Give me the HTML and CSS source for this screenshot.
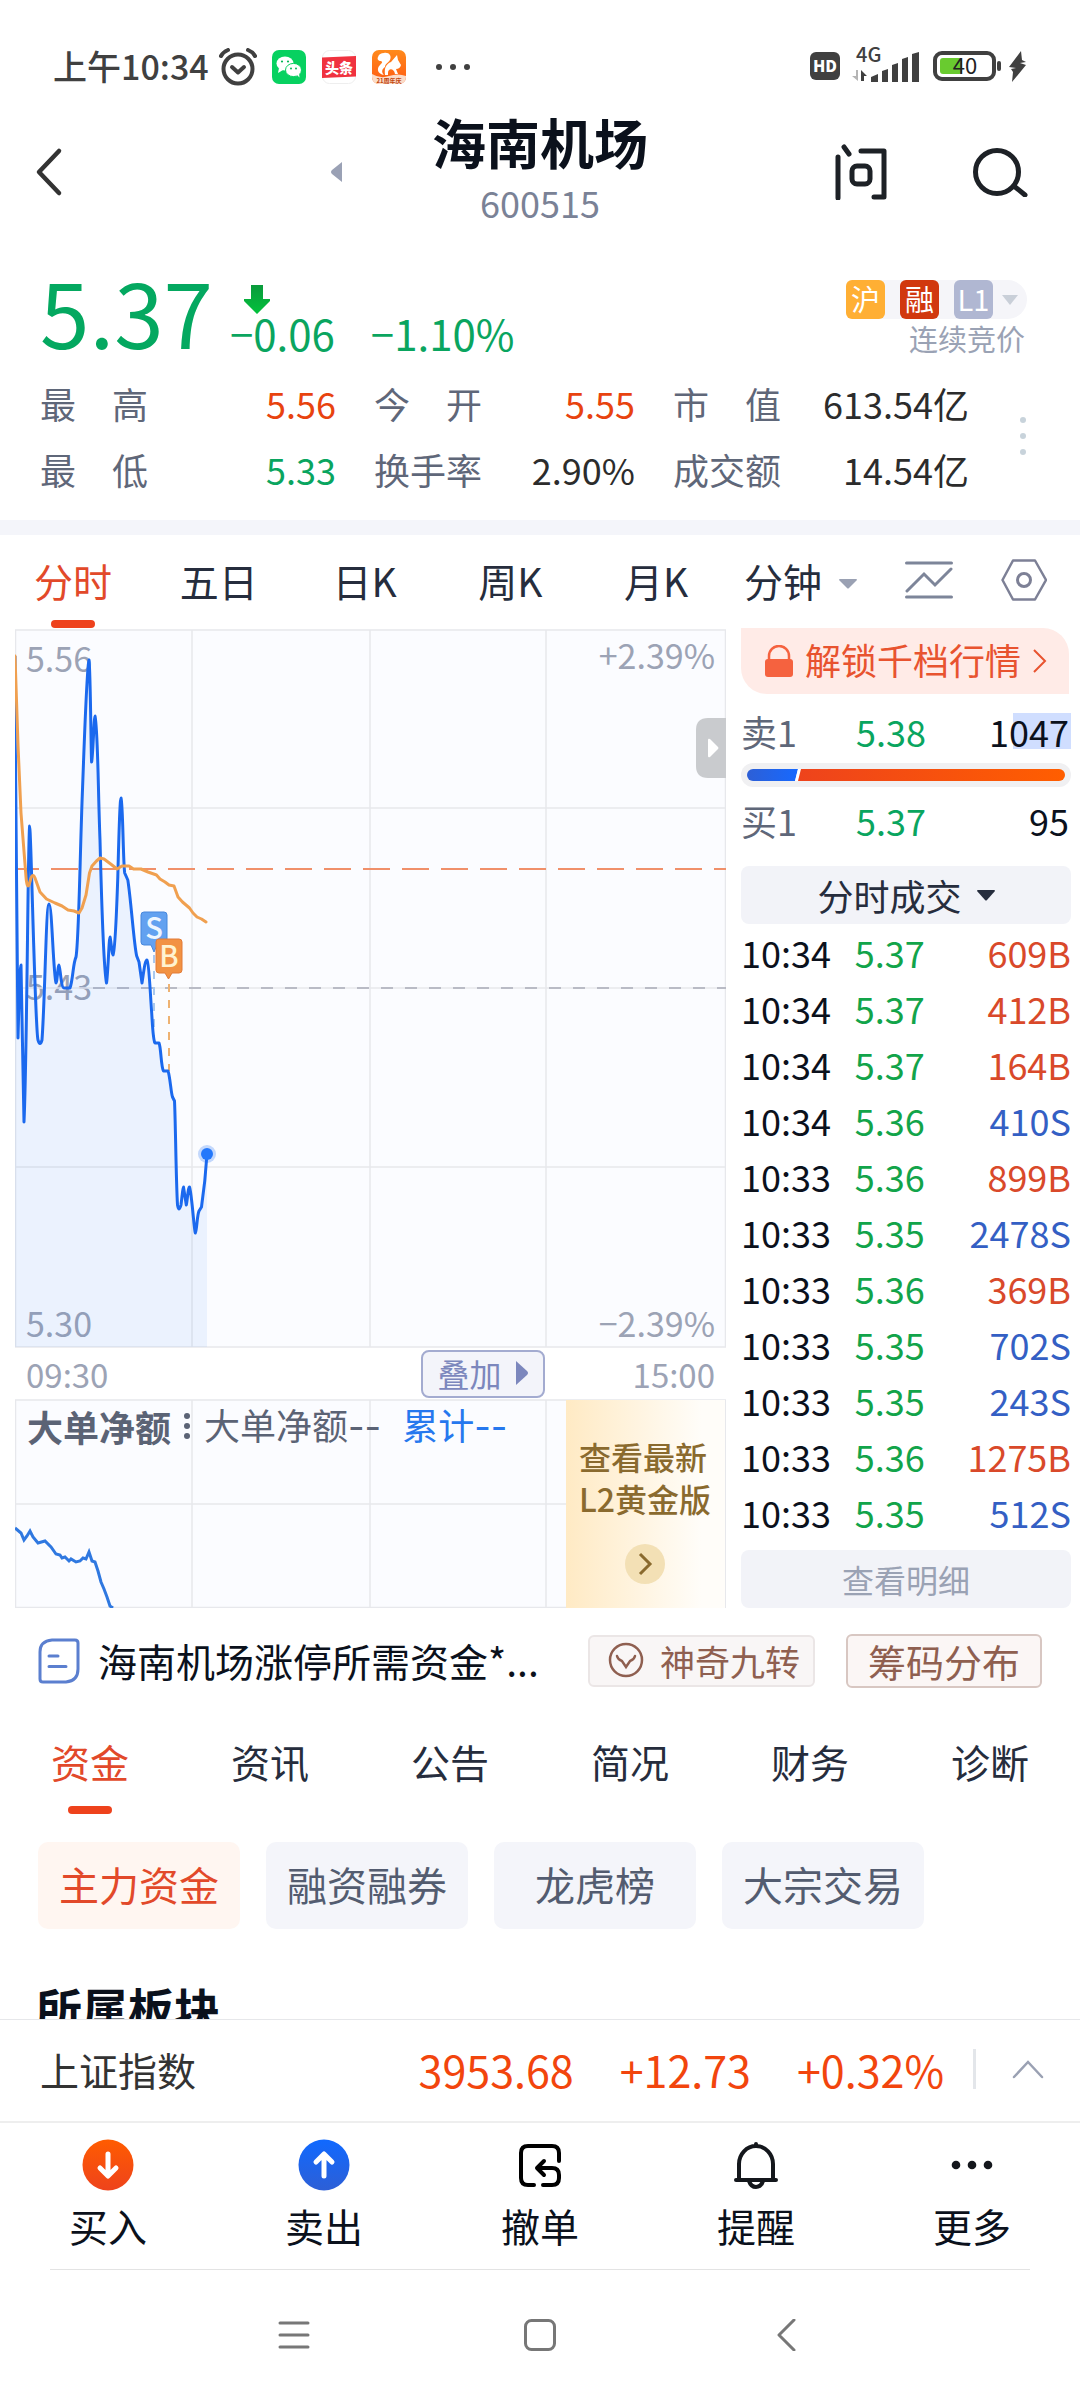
FILE: index.html
```html
<!DOCTYPE html>
<html lang="zh-CN">
<head>
<meta charset="utf-8">
<meta name="viewport" content="width=device-width, initial-scale=1">
<title>海南机场 600515</title>
<link rel="stylesheet" href="styles.css">
</head>
<body>
<div class="status">
  <span class="clock">上午10:34</span>
  <svg class="alarm" width="40" height="38" viewBox="0 0 40 38" fill="none" stroke="#404040" stroke-linecap="round"><circle cx="20" cy="21" r="14.500" stroke-width="4"/><path d="M14 19l6 5.500 6-5.500" stroke-width="4" stroke-linejoin="round"/><path d="M3 8q2-4 7-6M37 8q-2-4-7-6" stroke-width="4"/></svg>
  <svg class="app" width="34" height="34" viewBox="0 0 34 34"><rect width="34" height="34" rx="7" fill="#07d160"/><ellipse cx="13" cy="13.500" rx="8.500" ry="7" fill="#fff"/><path d="M7 18l-1 5 5-3z" fill="#fff"/><ellipse cx="21.500" cy="20" rx="8" ry="6.600" fill="#fff" stroke="#07d160"/><path d="M25 25l2.500 2.500-.5-4z" fill="#fff"/><g fill="#07b556"><circle cx="10" cy="11.500" r="1.100"/><circle cx="16" cy="11.500" r="1.100"/><circle cx="19" cy="18.500" r="1"/><circle cx="24" cy="18.500" r="1"/></g></svg>
  <svg class="app" width="34" height="34" viewBox="0 0 34 34"><rect x=".5" y=".5" width="33" height="33" rx="7" fill="#fff" stroke="#eee"/><path d="M0 7.500L34 6v20.500L0 28z" fill="#f0323f"/><text x="17" y="22.500" font-size="14" font-weight="900" fill="#fff" text-anchor="middle">头条</text></svg>
  <svg class="app" width="34" height="34" viewBox="0 0 34 34"><defs><linearGradient id="uc" x2="0" y2="1"><stop stop-color="#ff8a1c"/><stop offset="1" stop-color="#ff5a12"/></linearGradient></defs><rect width="34" height="34" rx="7" fill="url(#uc)"/><path d="M0 24q8 5 17 2 9-3 17 0v1a7 7 0 0 1-7 7H7a7 7 0 0 1-7-7z" fill="#fbdcc8"/><path d="M12 3c5-1 8 3 6 7-2 3-5 4-5 7-3 2-4 5-1 8-6-1-8-6-4-10 2-2 3-3 1-4-3 0-4-2-3-4 1-3 3-4 6-4z" fill="#fff"/><path d="M25 5l1 5 3 5q-1 4-5 4l2 5h-3c-1-6-7-6-7-1v2h-3c-1-7 1-11 6-13z" fill="#fff"/><text x="17" y="33" font-size="6" font-weight="700" fill="#c1440c" text-anchor="middle">21周年庆</text></svg>
  <svg class="more" width="36" height="8" viewBox="0 0 36 8" fill="#404040"><circle cx="4" cy="4" r="3"/><circle cx="18" cy="4" r="3"/><circle cx="32" cy="4" r="3"/></svg>
  <svg class="signals" width="218" height="50" viewBox="809 42 218 50">
    <rect x="810" y="52" width="30" height="28" rx="6" fill="#404040"/><text x="825" y="72" font-size="16" font-weight="900" fill="#fff" text-anchor="middle">HD</text>
    <text x="856" y="62" font-size="20" font-weight="500" fill="#404040">4G</text>
    <path d="M858 70v11l-6-5h4v-6z" fill="#b5b5b5"/><path d="M861 81V70l6 6h-3v5z" fill="#404040"/>
    <path d="M871 82v-5l7-3v8zM882 82V71l6-2v13zM892 82V65l6-2v19zM902 82V59l6-2v25zM912 82V54l7-2v30z" fill="#404040"/>
    <rect x="935" y="53" width="59" height="26" rx="7" fill="none" stroke="#404040" stroke-width="4"/><rect x="940" y="58" width="22" height="16" rx="3" fill="#69cb2f"/><rect x="997" y="61" width="4" height="10" rx="2" fill="#404040"/>
    <text x="965" y="74" font-size="22" fill="#222" text-anchor="middle">40</text>
    <path d="M1021 51l-12 16 7 1-5 1 2 3-1 10 14-17-6-2 6-1-4-2z" fill="#404040"/>
  </svg>
</div>

<main>
  <header class="head">
    <button class="icon-btn back" aria-label="返回"><svg width="28" height="50" viewBox="0 0 28 50" fill="none" stroke="#333" stroke-width="4.500" stroke-linecap="round" stroke-linejoin="round"><path d="M24 4L4 25l20 21"/></svg></button>
    <button class="icon-btn prev" aria-label="上一只"><svg width="11" height="20" viewBox="0 0 11 20" fill="#9aa1b5"><path d="M11 0v20L1 12q-2-2 0-4z"/></svg></button>
    <div class="stock"><h1>海南机场</h1><p>600515</p></div>
    <button class="icon-btn ask" aria-label="问"><svg width="52" height="56" viewBox="0 0 52 56" fill="none" stroke="#1d2126" stroke-width="5" stroke-linecap="round" stroke-linejoin="round"><path d="M3 13v41M9 3l5 7M26 7h23v46H39"/><rect x="17" y="22" width="18" height="18" rx="5"/></svg></button>
    <button class="icon-btn" aria-label="搜索"><svg width="56" height="50" viewBox="0 0 56 50" fill="none" stroke="#1d2126" stroke-width="5" stroke-linecap="round"><circle cx="25" cy="25" r="21.500"/><path d="M42 39l11 9"/></svg></button>
  </header>

  <section class="quote">
    <div class="price-row">
      <strong class="price">5.37</strong>
      <div class="change">
        <svg width="26" height="30" viewBox="0 0 26 30"><defs><linearGradient id="dn" x2="0" y2="1"><stop stop-color="#0a9a3c"/><stop offset="1" stop-color="#02c23c"/></linearGradient></defs><path d="M7 1h12v14h7v2L13 30 0 17v-2h7z" fill="url(#dn)"/></svg>
        <p><span>−0.06</span><span>−1.10%</span></p>
      </div>
      <div class="marks">
        <button class="badges"><i class="hu">沪</i><i class="rong">融</i><i class="lv">L1</i><svg width="16" height="10" viewBox="0 0 16 10" fill="#c9cfd8"><path d="M0 0h16L8 10z"/></svg></button>
        <p>连续竞价</p>
      </div>
    </div>
    <div class="stats-row">
      <dl class="stats">
        <div><dt><span>最</span><span>高</span></dt><dd class="up">5.56</dd></div>
        <div><dt><span>今</span><span>开</span></dt><dd class="up">5.55</dd></div>
        <div><dt><span>市</span><span>值</span></dt><dd>613.54亿</dd></div>
        <div><dt><span>最</span><span>低</span></dt><dd class="down">5.33</dd></div>
        <div><dt>换手率</dt><dd>2.90%</dd></div>
        <div><dt>成交额</dt><dd>14.54亿</dd></div>
      </dl>
      <svg width="8" height="40" viewBox="0 0 8 40" fill="#c8d3db"><circle cx="4" cy="4" r="3"/><circle cx="4" cy="20" r="3"/><circle cx="4" cy="36" r="3"/></svg>
    </div>
  </section>

  <nav class="periods">
    <button class="active">分时</button><button>五日</button><button>日K</button><button>周K</button><button>月K</button>
    <div class="tools">
      <button class="minute">分钟<svg width="18" height="10" viewBox="0 0 18 10" fill="#9aa1b3"><path d="M0 1q0-1 1-1h16q1 0 1 1l-8 8q-1 1-2 0z"/></svg></button>
      <button aria-label="画线"><svg width="48" height="40" viewBox="0 0 48 40" fill="none" stroke="#7d8599" stroke-width="3" stroke-linecap="round"><path d="M1.500 3h45M1.500 37h45M2 31l17-17 11 11L46 9"/></svg></button>
      <button aria-label="设置"><svg width="46" height="42" viewBox="0 0 46 42" fill="none" stroke="#7d8096" stroke-width="2.500" stroke-linejoin="round"><path d="M12 1.500h22L45 21 34 40.500H12L1.500 21z"/><circle cx="23" cy="21" r="6.500" stroke-width="3"/></svg></button>
    </div>
  </nav>

  <section class="board">
    <div class="charts">
      <svg class="chart" viewBox="15 629 711 719" role="img" aria-label="分时走势">
        <rect x="15" y="629" width="711" height="718" fill="#fbfcff"/>
        <g fill="#9ca3b5" font-size="34"><text x="26" y="672">5.56</text><text x="26" y="1000">5.43</text><text x="26" y="1337">5.30</text><text x="715" y="669" text-anchor="end">+2.39%</text><text x="715" y="1337" text-anchor="end">−2.39%</text></g>
        <path d="M192 630v717M370 630v717M546 630v717M15 808h711M15 988h711M15 1167h711M15.500 630h710v717h-710z" fill="none" stroke="#e7e8ec" stroke-width="1.500"/>
        <path d="M93 988h633" stroke="#b9bbc5" stroke-width="2" stroke-dasharray="12 12"/>
        <path d="M15 869h711" stroke="#f0906a" stroke-width="2" stroke-dasharray="27 12" stroke-dashoffset="3"/>
        <path class="area" d="M15 656L18 1038 21 965 24 1122 29.600 826 40 1044 49 904 56 983 59 965 64 988H71L76 957 83 787 89 660 92 762 95 716 100 840 106.500 983 110 937 113 955 118 877 121 798 125 873 137 958 142 983 147 960 152 1013 154 1043H159L163 1071H168L172 1097 174 1100 178 1207 183 1187 186 1205 189 1187 195 1233 199 1211 207 1154V1347H15z" fill="#1b6df5" fill-opacity=".07"/>
        <path d="M154 955v88" stroke="#a9c8ee" stroke-width="2" stroke-dasharray="8 8"/><path d="M169 984v87" stroke="#eeb272" stroke-width="2" stroke-dasharray="8 8"/>
        <path d="M15 656C15 780 16.500 900 18 1038C19 1000 20 965 21 965C22 1000 23 1090 24 1122C27 1060 28 830 29.600 826C31 826 35 1030 38 1040Q40 1047 42 1040C45 1000 46 904 49 904C52 904 53 970 56 983C57 983 58 965 59 965C60 965 61 988 64 988H70C73 980 73 963 76 957C79 940 80 850 82.600 787C85 720 87 665 89 660C90.500 670 91 755 91.600 762C93 755 94 716 95 716C98 730 98 790 100 840C102 920 105 975 106.500 983C108 975 109 937 110 937C111 940 112 955 113 955C114 953 116 930 117.800 877C119 830 120 798 121 798C123 805 123 860 124.700 873L127.800 880C131 900 134 945 136.700 956L139 962 142 983C144 970 145 960 147 960C149 962 150 990 151.700 1013C152.500 1025 153 1040 155 1043H159C161 1047 161 1067 163.500 1071H168C170 1076 171 1093 172.500 1097L174.500 1101C175.500 1120 176 1180 177.500 1205Q179 1213 181 1205C182 1197 183 1187 183.500 1187L186.300 1205C187.500 1200 188 1187 189.500 1187C192 1195 194 1230 195.300 1233C197 1230 197 1215 199 1211L201.500 1207C204 1190 206 1170 207 1154" fill="none" stroke="#1b69ee" stroke-width="3" stroke-linejoin="round"/>
        <path d="M15 656C16 690 17 720 18 745L21 813 26 877Q27 889 29 885L31 878Q33 873 35 878L40 892 46.500 899 55 903 62 906 68 910 74 911 79 913 82 908 86 895 89.500 873 92 866 96.500 861 100 858 104 859 112 865 117 869 122 866 129 866 133.500 869 141 869 148 872 156.500 875 160 879 165 882 169 885 174 886 178 897 182.500 902 189.500 908 193 913 197 917 201.500 919 206 922" fill="none" stroke="#f0a050" stroke-width="3" stroke-linejoin="round" stroke-linecap="round"/>
        <circle cx="207" cy="1154" r="9" fill="#1b6df5" fill-opacity=".25"/><circle cx="207" cy="1154" r="6" fill="#2478fb"/>
        <path d="M144 912h20q3 0 3 3v27q0 3-3 3h-7l-3 7-3-7h-7q-3 0-3-3v-27q0-3 3-3z" fill="#62a1f0" stroke="#4787dc"/><text x="154" y="939" font-size="29" font-weight="500" fill="#eef6ff" text-anchor="middle">S</text>
        <path d="M159 939h20q3 0 3 3v28q0 3-3 3h-7l-3.500 6-3.500-6h-6q-3 0-3-3v-28q0-3 3-3z" fill="#f29243" stroke="#e27b38"/><text x="169" y="967" font-size="29" font-weight="500" fill="#fff3d0" text-anchor="middle">B</text>
        <path d="M726 718h-18q-12 0-12 12v36q0 12 12 12h18z" fill="#c9cbce"/><path d="M708 740q0-2 2-1l8 8q1 1 0 2l-8 8q-2 1-2-1z" fill="#fff"/>
      </svg>
      <div class="axis"><span>09:30</span><button>叠加<svg width="12" height="24" viewBox="0 0 12 24" fill="#7c87bd"><path d="M0 0l11 10q2 2 0 4L0 24z"/></svg></button><span>15:00</span></div>
      <div class="flow">
        <svg class="flow-chart" viewBox="15 1399 711 209" role="img" aria-label="大单净额走势">
          <rect x="15" y="1399" width="711" height="209" fill="#fbfcff"/>
          <path d="M192 1400v208M370 1400v208M546 1400v208M15 1504h711M15.500 1400h710v207.500h-710z" fill="none" stroke="#e7e8ec" stroke-width="1.500"/>
          <path d="M15 1528l6 5 3 7 3-4 3-5 3 6 5 6 7-2 6 6 5 7 4 1 2 3 3-1 4 4 2-2 5 3 4-1 3-3 3 1 3-7 3 9 3 1 3 9 3 11 3 7 3 8 3 9 3 2" fill="none" stroke="#2f78e0" stroke-width="3"/>
        </svg>
        <p class="flow-title"><b>大单净额</b><svg width="8" height="28" viewBox="0 0 8 28" fill="#5b6375"><circle cx="4" cy="4" r="3"/><circle cx="4" cy="14" r="3"/><circle cx="4" cy="24" r="3"/></svg><span>大单净额<span class="dash">--</span></span><span class="sum">累计<span class="dash">--</span></span></p>
        <a class="gold" href="#l2">查看最新<br>L2黄金版<svg width="40" height="40" viewBox="0 0 40 40" fill="none"><circle cx="20" cy="20" r="20" fill="#f3e0b5"/><path d="M15 10l10 10-10 10" stroke="#8a6a2e" stroke-width="3"/></svg></a>
      </div>
    </div>

    <div class="book">
      <a class="unlock" href="#unlock"><svg width="28" height="32" viewBox="0 0 28 32"><rect y="14" width="28" height="18" rx="3" fill="#f5623f"/><path d="M4 15v-4a10 10 0 0 1 20 0v4" fill="none" stroke="#f5623f" stroke-width="2.500"/></svg><span>解锁千档行情</span><svg width="14" height="24" viewBox="0 0 14 24" fill="none" stroke="#e8532f" stroke-width="2"><path d="M1 1l11 11L1 23"/></svg></a>
      <div class="level"><span>卖1</span><span class="down">5.38</span><span class="vol lit">1047</span></div>
      <svg class="ratio" viewBox="0 0 330 24" role="img" aria-label="买卖比"><defs><linearGradient id="buy"><stop stop-color="#2d5fd6"/><stop offset="1" stop-color="#1769ff"/></linearGradient><linearGradient id="sell"><stop stop-color="#ee431c"/><stop offset="1" stop-color="#ff5e00"/></linearGradient></defs><rect width="330" height="24" rx="12" fill="#f0f0f2"/><path d="M12 6h45l-3 12H12a6 6 0 0 1 0-12z" fill="url(#buy)"/><path d="M57 6h3l-3 12h-3z" fill="#fff"/><path d="M60 6h258a6 6 0 0 1 0 12H57z" fill="url(#sell)"/></svg>
      <div class="level"><span>买1</span><span class="down">5.37</span><span class="vol">95</span></div>
      <button class="trade-head">分时成交<svg width="18" height="11" viewBox="0 0 18 11" fill="#262d3d"><path d="M0 1q0-1 1-1h16q1 0 1 1l-8 9q-1 1-2 0z"/></svg></button>
      <table class="ticks">
        <tr><td>10:34</td><td>5.37</td><td class="b">609B</td></tr>
        <tr><td>10:34</td><td>5.37</td><td class="b">412B</td></tr>
        <tr><td>10:34</td><td>5.37</td><td class="b">164B</td></tr>
        <tr><td>10:34</td><td>5.36</td><td class="s">410S</td></tr>
        <tr><td>10:33</td><td>5.36</td><td class="b">899B</td></tr>
        <tr><td>10:33</td><td>5.35</td><td class="s">2478S</td></tr>
        <tr><td>10:33</td><td>5.36</td><td class="b">369B</td></tr>
        <tr><td>10:33</td><td>5.35</td><td class="s">702S</td></tr>
        <tr><td>10:33</td><td>5.35</td><td class="s">243S</td></tr>
        <tr><td>10:33</td><td>5.36</td><td class="b">1275B</td></tr>
        <tr><td>10:33</td><td>5.35</td><td class="s">512S</td></tr>
      </table>
      <button class="detail">查看明细</button>
    </div>
  </section>

  <section class="news">
    <svg width="42" height="46" viewBox="0 0 42 46" fill="none" stroke="#5b7fcf" stroke-width="3" stroke-linecap="round"><path d="M14 2h23q3 0 3 3v26q0 12-12 13H5q-3 0-3-3V14Q2 3 14 2z"/><path d="M11 18h9M11 28.500h17"/></svg>
    <a href="#news">海南机场涨停所需资金*...</a>
    <button class="nine"><svg width="36" height="36" viewBox="0 0 36 36" fill="none" stroke="#8f5f50" stroke-width="2.500" stroke-linecap="round"><circle cx="18" cy="18" r="16"/><path d="M9 14q1 4 5 5l4 6 4-6q4-1 5-5"/></svg>神奇九转</button>
    <button class="chips-dist">筹码分布</button>
  </section>

  <nav class="topics"><button class="active">资金</button><button>资讯</button><button>公告</button><button>简况</button><button>财务</button><button>诊断</button></nav>
  <div class="pills"><button class="on">主力资金</button><button>融资融券</button><button>龙虎榜</button><button>大宗交易</button></div>
  <h2>所属板块</h2>
</main>

<footer>
  <div class="index"><span class="name">上证指数</span><span>3953.68</span><span>+12.73</span><span>+0.32%</span><i class="sep"></i><button class="icon-btn" aria-label="展开"><svg width="32" height="20" viewBox="0 0 32 20" fill="none" stroke="#9aa1b3" stroke-width="2.500" stroke-linecap="round"><path d="M2 18L16 3l14 15"/></svg></button></div>
  <nav class="actions">
    <button><svg width="52" height="52" viewBox="0 0 52 52" fill="none" stroke="#fff" stroke-width="5" stroke-linecap="round" stroke-linejoin="round"><defs><linearGradient id="g1" x2="0" y2="1"><stop stop-color="#ff5c00"/><stop offset="1" stop-color="#ee431c"/></linearGradient></defs><circle cx="26" cy="26" r="25.500" fill="url(#g1)" stroke="none"/><path d="M26 15v21M18 29l8 8 8-8"/></svg>买入</button>
    <button><svg width="52" height="52" viewBox="0 0 52 52" fill="none" stroke="#fff" stroke-width="5" stroke-linecap="round" stroke-linejoin="round"><defs><linearGradient id="g2" x2="0" y2="1"><stop stop-color="#1069ff"/><stop offset="1" stop-color="#2d5fd6"/></linearGradient></defs><circle cx="26" cy="26" r="25.500" fill="url(#g2)" stroke="none"/><path d="M26 37V16M18 23l8-8 8 8"/></svg>卖出</button>
    <button><svg width="52" height="52" viewBox="0 0 52 52" fill="none" stroke="#000" stroke-width="4" stroke-linecap="round" stroke-linejoin="round"><path d="M45 22v-8q0-7-7-7H14q-7 0-7 7v25q0 7 7 7h6M25 29h13q7 0 7 7v3q0 7-7 7h-9M30 22l-7 7 7 7"/></svg>撤单</button>
    <button><svg width="52" height="52" viewBox="0 0 52 52" fill="none" stroke="#14171c" stroke-width="4" stroke-linecap="round" stroke-linejoin="round"><path d="M6 41h40M9 40V25a17 18 0 0 1 34 0v15M26 5v1M19 42q2 6 7 6t7-6"/></svg>提醒</button>
    <button><svg width="52" height="52" viewBox="0 0 52 52" fill="#14171c"><circle cx="10" cy="26" r="4.300"/><circle cx="26" cy="26" r="4.300"/><circle cx="42" cy="26" r="4.300"/></svg>更多</button>
  </nav>
  <nav class="system">
    <button class="icon-btn" aria-label="菜单"><svg width="32" height="32" viewBox="0 0 32 32" stroke="#777" stroke-width="3" stroke-linecap="round"><path d="M2 4h28M2 16h28M2 28h28"/></svg></button>
    <button class="icon-btn" aria-label="主页"><svg width="32" height="32" viewBox="0 0 32 32" fill="none" stroke="#777" stroke-width="3"><rect x="1.500" y="1.500" width="29" height="29" rx="6"/></svg></button>
    <button class="icon-btn" aria-label="后退"><svg width="32" height="32" viewBox="0 0 32 32" fill="none" stroke="#777" stroke-width="3" stroke-linecap="round" stroke-linejoin="round"><path d="M24 1L9 16l15 15"/></svg></button>
  </nav>
</footer>
</body>
</html>
```
FILE: styles.css
```css
* { box-sizing: border-box; margin: 0; padding: 0; }
body {
  height: 100vh;
  display: flex;
  flex-direction: column;
  background: #fff;
  color: #0b111c;
  font-family: "Noto Sans CJK SC", "Noto Sans", sans-serif;
  font-size: 36px;
}
button { background: none; border: 0; color: inherit; font: inherit; cursor: pointer; }
a { color: inherit; text-decoration: none; }
svg { display: block; flex: none; }
i { font-style: normal; }
main { flex: 1; min-height: 0; overflow: hidden; }
.icon-btn { display: flex; align-items: center; justify-content: center; }
.up { color: #e8430f; }
.down { color: #0aa55f; }

.status { display: flex; align-items: center; height: 92px; padding: 42px 53px 0; }
.clock { font-size: 34px; line-height: 46px; padding-bottom: 2px; color: #404040; font-weight: 500; margin-right: 9px; }
.alarm { margin-right: 14px; }
.app { margin-right: 16px; }
.more { margin-left: 13px; }
.signals { margin-left: auto; }

.head { display: flex; align-items: center; height: 138px; padding: 22px 52px 0 35px; position: relative; }
.prev { margin-left: 268px; }
.stock { position: absolute; left: 50%; transform: translateX(-50%); top: 20px; text-align: center; }
.stock h1 { font-size: 54px; line-height: 60px; font-weight: 700; white-space: nowrap; }
.stock p { font-size: 36px; line-height: 40px; margin-top: 10px; color: #7a8296; }
.ask { margin-left: auto; margin-right: 85px; }

.quote { padding: 36px 53px 18px 40px; border-bottom: 15px solid #f4f5fa; }
.price-row { display: flex; align-items: flex-end; }
.price { font-size: 89px; line-height: 90px; font-weight: 400; color: #04a860; }
.change { margin-left: 17px; padding-bottom: 4px; color: #0aa55f; font-size: 42px; line-height: 38px; }
.change svg { margin-left: 14px; }
.change p { display: flex; gap: 36px; }
.marks { margin-left: auto; display: flex; flex-direction: column; align-items: flex-end; padding-bottom: 2px; }
.marks p { font-size: 29px; line-height: 32px; margin: 3px 2px 0 0; color: #9aa2b4; }
.badges { display: flex; align-items: center; gap: 15px; background: #f5f5f9; border-radius: 8px 20px 20px 8px; padding-right: 9px; }
.badges i { width: 39px; height: 39px; line-height: 37px; border-radius: 6px; color: #fff; font-size: 29px; text-align: center; }
.badges svg { margin-left: -6px; }
.hu { background: #ffaf34; }
.rong { background: #d1380e; }
.badges .lv { background: #b0b7d2; }
.stats-row { display: flex; align-items: center; margin-top: 14px; }
.stats { flex: 1; display: grid; grid-template-columns: 295fr 260fr 295fr; column-gap: 38px; line-height: 66px; }
.stats div { display: flex; justify-content: space-between; }
.stats dt { width: 108px; display: flex; justify-content: space-between; color: #5f6779; }
.stats dd:not([class]) { color: #2c2c2c; }
.stats-row > svg { margin-left: 50px; }

.periods { display: flex; height: 93px; font-size: 39px; color: #262d3d; }
.periods > button { flex: 0 0 13.5%; height: 90px; }
.periods .active, .topics .active { position: relative; color: #e2492a; }
.periods .active::after, .topics .active::after {
  content: ""; position: absolute; left: 50%; bottom: -3px; width: 44px; height: 8px;
  margin-left: -22px; border-radius: 4px; background: #ee421c;
}
.tools { flex: 1; height: 90px; display: flex; align-items: center; justify-content: space-between; padding: 0 33px 0 15px; }
.minute { display: flex; align-items: center; gap: 17px; }
.minute svg { margin-top: 8px; }

.board { display: grid; grid-template-columns: 711fr 330fr; column-gap: 15px; padding: 0 9px 0 15px; }
.charts { padding-top: 1px; }
.chart, .flow-chart { width: 100%; height: auto; }
.axis { display: flex; align-items: center; height: 51px; padding: 0 11px; color: #9ca3b5; font-size: 33px; line-height: 48px; }
.axis button { display: flex; align-items: center; gap: 14px; height: 48px; margin: 0 88px 0 auto; padding: 0 15px 2px 15px; border: 2px solid #a3abd0; border-radius: 8px; background: #f3f4fa; color: #7c87bd; font-size: 32px; }
.flow { position: relative; }
.flow-title { position: absolute; left: 12px; top: 3px; display: flex; align-items: center; line-height: 44px; color: #5b6375; white-space: nowrap; }
.flow-title svg { margin: 0 13px 0 12px; }
.flow-title .dash { font-family: Inter, sans-serif; }
.sum { margin-left: 21px; color: #2678ee; }
.gold { position: absolute; right: 1px; top: 1px; bottom: 0; width: 159px; padding: 35px 13px 0; background: linear-gradient(90deg, #ffeac4, #fffdf9 85%); color: #8a6a2e; font-size: 32px; line-height: 42px; font-weight: 500; white-space: nowrap; }
.gold svg { margin: 25px 0 0 46px; }

.book { display: flex; flex-direction: column; }
.unlock { display: flex; align-items: center; height: 66px; padding: 0 22px 0 24px; margin-right: 2px; border-radius: 0 26px 0 26px; background: #ffebe7; color: #e8532f; }
.unlock span { margin: -4px auto 0; line-height: 44px; }
.level { display: grid; grid-template-columns: 115fr 100fr 115fr; line-height: 36px; color: #5f6779; margin-top: 19px; }
.vol { color: #0b111c; justify-self: end; padding-right: 2px; }
.lit { background: linear-gradient(90deg, transparent 24px, #d0deff 24px); }
.ratio { width: 100%; height: auto; margin-top: 14px; }
.ratio + .level { margin-top: 15px; }
.trade-head, .detail { height: 58px; border-radius: 8px; background: #f2f3f8; line-height: 54px; }
.trade-head { display: flex; align-items: center; justify-content: center; gap: 15px; margin-top: 28px; color: #262d3d; }
.ticks { width: 100%; border-collapse: collapse; }
.ticks td { width: 35%; height: 56px; line-height: 56px; }
.ticks td:nth-child(2) { color: #12a44a; }
.ticks td:nth-child(3) { width: 30%; text-align: right; }
.ticks .b { color: #d9492a; }
.ticks .s { color: #345fc4; }
.detail { margin-top: 10px; color: #9aa2b4; font-size: 32px; }

.news { display: flex; align-items: center; height: 54px; margin-top: 26px; padding: 0 38px; }
.news a { font-size: 39px; line-height: 54px; margin-left: 18px; padding-bottom: 2px; white-space: nowrap; }
.news button { display: flex; align-items: center; border-radius: 6px; color: #8f5f50; }
.nine { margin-left: auto; height: 52px; gap: 16px; padding: 0 13px 2px 18px; border: 2px solid #ebe6e6; background: #f9f6f6; }
.news .nine { font-size: 35px; }
.news .chips-dist { height: 54px; margin-left: 31px; padding: 0 20px 2px; border: 2px solid #d8c7c2; background: #fbf6f5; font-size: 38px; }

.topics { display: flex; margin-top: 22px; font-size: 39px; color: #262d3d; }
.topics button { flex: 1; height: 104px; padding-bottom: 2px; }
.topics .active::after { bottom: 0; }
.pills { display: flex; gap: 26px; margin-top: 28px; padding: 0 156px 0 38px; }
.pills button { flex: 1; height: 87px; padding-bottom: 4px; border-radius: 10px; background: #f4f5fa; color: #535c70; font-size: 40px; white-space: nowrap; }
.pills .on { background: #fff6f1; color: #e2492a; }
h2 { margin: 48px 0 0 36px; font-size: 46px; line-height: 60px; font-weight: 700; }

footer { flex: none; background: #fff; }
.index { display: flex; align-items: center; height: 104px; padding: 0 36px 4px 40px; border-top: 1px solid #e6e7ea; border-bottom: 2px solid #eee; color: #f2450d; font-size: 43px; line-height: 50px; }
.index span + span { margin-left: 46px; }
.index .name { margin-right: auto; color: #333; font-size: 39px; }
.sep { width: 3px; height: 40px; margin: 0 36px 0 29px; background: #e3e6ea; }
.actions { display: flex; padding: 16px 0 23px; position: relative; }
.actions::after { content: ""; position: absolute; left: 50px; right: 50px; bottom: 0; border-bottom: 1px solid #e3e3e3; }
.actions button { flex: 1; display: flex; flex-direction: column; align-items: center; gap: 12px; font-size: 39px; line-height: 44px; }
.system { display: flex; align-items: center; justify-content: center; gap: 214px; height: 130px; }
```
